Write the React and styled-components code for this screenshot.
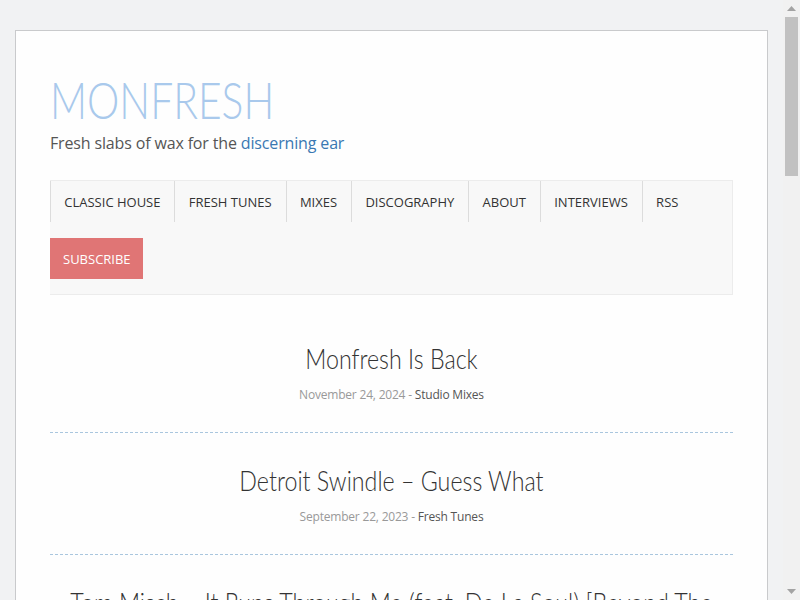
import React from "react";
import styled, { createGlobalStyle } from "styled-components";

const Global = createGlobalStyle`
  html, body { margin: 0; padding: 0; }
  body {
    background: #f1f2f3;
    font-family: "Open Sans", "Liberation Sans", sans-serif;
    color: #555;
  }
  a { text-decoration: none; }
`;

const Shell = styled.div`
  display: flex;
  height: 100vh;
  overflow: hidden;
`;

const Viewport = styled.div`
  flex: 1;
  min-width: 0;
  overflow: hidden;
`;

const ScrollBar = styled.div`
  width: 17px;
  flex: none;
  display: flex;
  flex-direction: column;
  background: #f1f1f1;
`;

const ArrowBtn = styled.div`
  height: 17px;
  display: flex;
  align-items: center;
  justify-content: center;
`;

const Track = styled.div`
  flex: 1;
  padding: 0 2px;
`;

const Thumb = styled.div`
  height: 159px;
  background: #c1c1c1;
`;

const Page = styled.div`
  padding: 30px 15px 40px;
`;

const Container = styled.div`
  background: #fefefe;
  border: 1px solid #c9cacc;
  padding: 34px 34px 40px;
`;

const Header = styled.header`
  padding-top: 5px;
`;

const Logo = styled.h1`
  margin: 0;
  font-family: "Lato", "Open Sans", sans-serif;
  font-weight: 300;
  font-size: 51px;
  line-height: 60px;
  color: #a9c9ec;
  transform: scaleX(0.8);
  transform-origin: left center;
`;

const Tagline = styled.p`
  margin: 2px 0 26px;
  font-size: 16px;
  line-height: 22px;
  letter-spacing: -0.15px;
  color: #555;
`;

const TagLink = styled.a`
  color: #3a78b2;
`;

const Nav = styled.ul`
  list-style: none;
  margin: 0;
  padding: 0 0 15px;
  display: flex;
  flex-wrap: wrap;
  row-gap: 16px;
  background: #f8f8f8;
  border: 1px solid #ececec;
  border-left: none;
`;

const NavItem = styled.li`
  display: flex;
  align-items: center;
  height: 41px;
  padding: ${(p) => (p.$accent ? "0 12px 0 13px" : "0 14px 0 13.3px")};
  font-size: 13px;
  text-transform: uppercase;
  color: ${(p) => (p.$accent ? "#fff" : "#333")};
  background: ${(p) => (p.$accent ? "#e07575" : "transparent")};
  border-left: ${(p) => (p.$accent ? "none" : "1px solid #dcdcdc")};
`;

const Posts = styled.div`
  padding-top: 32px;
`;

const Post = styled.article`
  text-align: center;
  padding: 14px 0 28px;
  border-bottom: 1px dashed #a9c6de;
  margin-bottom: 16px;
`;

const PostTitle = styled.h2`
  margin: 0 0 11px -10.24%;
  width: 120.48%;
  transform: scaleX(0.83);
  font-family: "Lato", "Open Sans", sans-serif;
  font-weight: 300;
  font-size: 28px;
  line-height: 34px;
  color: #333;
`;

const Meta = styled.div`
  font-size: 12px;
  line-height: 18px;
  letter-spacing: -0.2px;
  color: #999;
`;

const Cat = styled.a`
  color: #555;
`;

const navItems = [
  "Classic House",
  "Fresh Tunes",
  "Mixes",
  "Discography",
  "About",
  "Interviews",
  "RSS",
];

const posts = [
  { title: "Monfresh Is Back", date: "November 24, 2024", cat: "Studio Mixes" },
  { title: "Detroit Swindle – Guess What", date: "September 22, 2023", cat: "Fresh Tunes" },
  {
    title: "Tom Misch – It Runs Through Me (feat. De La Soul) [Beyond The Groove Remix]",
    date: "August 14, 2023",
    cat: "Fresh Tunes",
  },
  { title: "Kerri Chandler – Rain", date: "June 3, 2023", cat: "Classic House" },
];

const Arrow = ({ down }) => (
  <svg width="9" height="5" viewBox="0 0 9 5">
    <path d={down ? "M0 0h9L4.5 5z" : "M0 5h9L4.5 0z"} fill="#a3a3a3" />
  </svg>
);

export default function App() {
  return (
    <Shell>
      <Global />
      <Viewport>
        <Page>
          <Container>
            <Header>
              <Logo>MONFRESH</Logo>
              <Tagline>
                Fresh slabs of wax for the <TagLink href="#">discerning ear</TagLink>
              </Tagline>
            </Header>
            <Nav>
              {navItems.map((n) => (
                <NavItem key={n}>{n}</NavItem>
              ))}
              <NavItem $accent>Subscribe</NavItem>
            </Nav>
            <Posts>
              {posts.map((p) => (
                <Post key={p.title}>
                  <PostTitle>{p.title}</PostTitle>
                  <Meta>
                    {p.date} - <Cat href="#">{p.cat}</Cat>
                  </Meta>
                </Post>
              ))}
            </Posts>
          </Container>
        </Page>
      </Viewport>
      <ScrollBar>
        <ArrowBtn>
          <Arrow />
        </ArrowBtn>
        <Track>
          <Thumb />
        </Track>
        <ArrowBtn>
          <Arrow down />
        </ArrowBtn>
      </ScrollBar>
    </Shell>
  );
}
